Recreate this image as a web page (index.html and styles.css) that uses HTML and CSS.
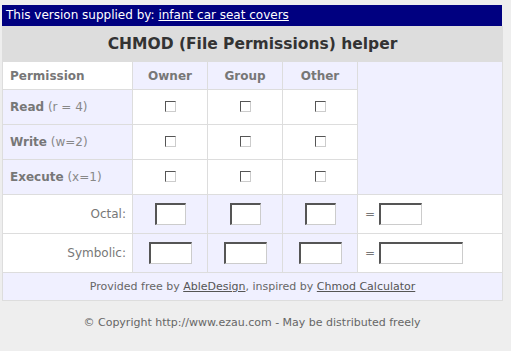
FILE: index.html
```
<!doctype html>
<html lang="en">
<head>
    <meta charset="UTF-8">
    <title>CHMOD (File Permissions) helper</title>
    <link rel="stylesheet" href="styles.css">
</head>
<body>
<div class="wrap">
    <div class="supplied">This version supplied by: <a href="#">infant car seat covers</a></div>
    <table class="chmod">
        <colgroup>
            <col class="c-perm">
            <col class="c-who">
            <col class="c-who">
            <col class="c-who">
            <col class="c-res">
        </colgroup>
        <tr>
            <th colspan="5" class="title">CHMOD (File Permissions) helper</th>
        </tr>
        <tr class="head">
            <th class="perm">Permission</th>
            <th class="alt">Owner</th>
            <th class="alt">Group</th>
            <th class="alt">Other</th>
            <td class="alt" rowspan="4"></td>
        </tr>
        <tr class="bit">
            <td class="alt label"><b>Read</b> (r = 4)</td>
            <td><input type="checkbox"></td>
            <td><input type="checkbox"></td>
            <td><input type="checkbox"></td>
        </tr>
        <tr class="bit">
            <td class="alt label"><b>Write</b> (w=2)</td>
            <td><input type="checkbox"></td>
            <td><input type="checkbox"></td>
            <td><input type="checkbox"></td>
        </tr>
        <tr class="bit">
            <td class="alt label"><b>Execute</b> (x=1)</td>
            <td><input type="checkbox"></td>
            <td><input type="checkbox"></td>
            <td><input type="checkbox"></td>
        </tr>
        <tr class="val">
            <td class="name">Octal:</td>
            <td class="alt"><input type="text" class="oct"></td>
            <td class="alt"><input type="text" class="oct"></td>
            <td class="alt"><input type="text" class="oct"></td>
            <td class="res">= <input type="text" class="octres"></td>
        </tr>
        <tr class="val">
            <td class="name">Symbolic:</td>
            <td class="alt"><input type="text" class="sym"></td>
            <td class="alt"><input type="text" class="sym"></td>
            <td class="alt"><input type="text" class="sym"></td>
            <td class="res">= <input type="text" class="symres"></td>
        </tr>
        <tr>
            <td colspan="5" class="alt foot">Provided free by <a href="#">AbleDesign</a>, inspired by <a href="#">Chmod Calculator</a></td>
        </tr>
    </table>
    <p class="copy">&copy; Copyright http://www.ezau.com - May be distributed freely</p>
</div>
</body>
</html>
```
FILE: styles.css
```
*{
    margin: 0;
    padding: 0;
}
body{
    background-color: #eee;
    font-family: "DejaVu Sans", Verdana, sans-serif;
    color: #666;
}
.wrap{
    width: 500px;
    margin: 5px 0 0 2px;
}
.supplied{
    background-color: #000080;
    color: #fff;
    font-size: 12px;
    height: 21px;
    line-height: 21px;
    padding-left: 4px;
}
.supplied a{
    color: #fff;
}
.chmod{
    width: 500px;
    table-layout: fixed;
    border-collapse: collapse;
    background-color: #fff;
    border: 1px solid #ddd;
}
.c-perm{
    width: 130px;
}
.c-who{
    width: 75px;
}
.c-res{
    width: 145px;
}
.chmod td, .chmod th{
    border: 1px solid #ddd;
    text-align: center;
    vertical-align: middle;
    white-space: nowrap;
}
.title{
    background-color: #ddd;
    color: #333;
    font-size: 15.5px;
    height: 34px;
}
.alt{
    background-color: #f0f0ff;
}
.head th{
    height: 27px;
    font-size: 12px;
    color: #777;
}
.chmod .perm{
    text-align: left;
    padding-left: 7px;
}
.bit td{
    height: 34px;
}
.chmod .label{
    text-align: left;
    padding-left: 7px;
    font-size: 12px;
    color: #888;
}
.label b{
    color: #777;
}
input[type=checkbox]{
    -webkit-appearance: none;
    appearance: none;
    width: 11px;
    height: 11px;
    border-top: 1px solid #555;
    border-left: 1px solid #555;
    border-right: 1px solid #ccc;
    border-bottom: 1px solid #ccc;
    background-color: #fff;
    vertical-align: middle;
    margin-top: -4px;
}
.val td{
    height: 38px;
}
.chmod .name{
    text-align: right;
    padding-right: 6px;
    font-size: 12px;
    color: #777;
}
input[type=text]{
    box-sizing: border-box;
    height: 22px;
    border-top: 2px solid #555;
    border-left: 2px solid #555;
    border-right: 1px solid #ccc;
    border-bottom: 1px solid #ccc;
    background-color: #fff;
    vertical-align: middle;
}
.oct{
    width: 31px;
}
.sym{
    width: 43px;
}
.chmod .res{
    text-align: left;
    padding-left: 7px;
    font-size: 12px;
    color: #777;
}
.octres{
    width: 43px;
}
.symres{
    width: 84px;
}
.foot{
    height: 27px;
    font-size: 11px;
    color: #666;
}
.foot a{
    color: #555;
}
.copy{
    text-align: center;
    font-size: 11px;
    color: #666;
    margin-top: 15px;
}
```
